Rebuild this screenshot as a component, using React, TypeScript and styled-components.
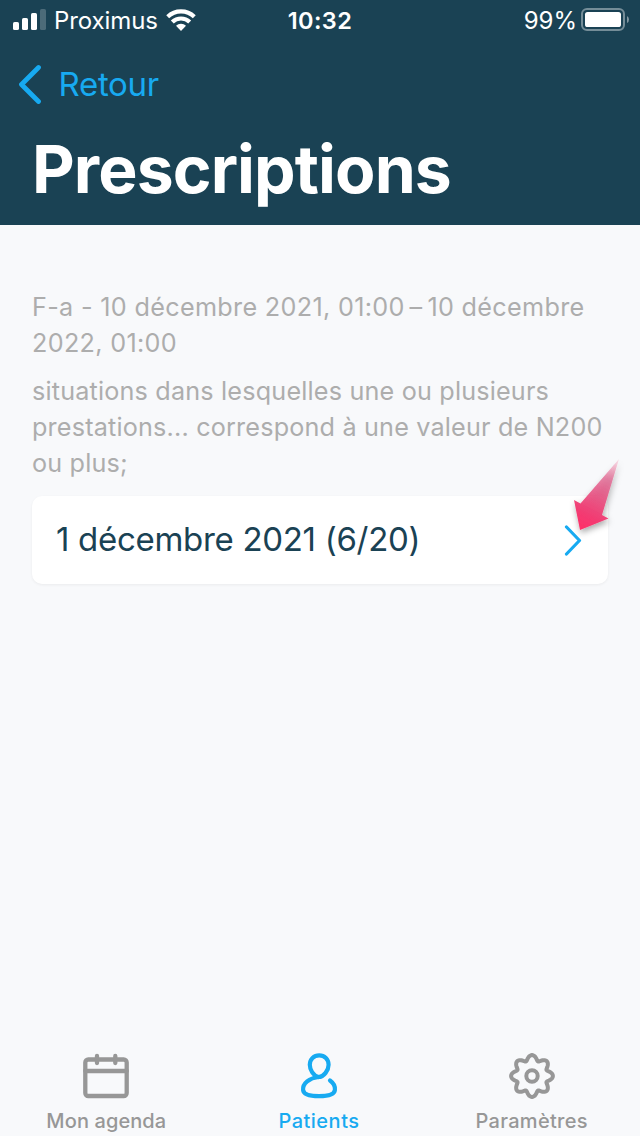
import React from "react";
import styled, { createGlobalStyle } from "styled-components";

const navy = "#1a4254";
const blue = "#17aaf1";
const grey = "#979797";

const GlobalStyle = createGlobalStyle`
  * { box-sizing: border-box; }
  body {
    margin: 0;
    background: #f8f9fb;
    font-family: Inter, "Liberation Sans", sans-serif;
    -webkit-font-smoothing: antialiased;
  }
  svg { display: block; flex: none; }
`;

const Screen = styled.div`
  width: 640px;
  height: 1136px;
  display: flex;
  flex-direction: column;
  overflow: hidden;
`;

const Header = styled.header`
  height: 225px;
  background: ${navy};
  color: #fff;
`;

const StatusBar = styled.div`
  height: 40px;
  display: grid;
  grid-template-columns: 1fr auto 1fr;
  padding: 0 11px 0 13px;
`;

const StatusGroup = styled.div<{ $end?: boolean }>`
  display: flex;
  align-items: flex-start;
  justify-content: ${(p) => (p.$end ? "flex-end" : "flex-start")};
`;

const Label = styled.span<{
  $size: number;
  $line: number;
  $spacing?: number;
  $weight?: number;
}>`
  display: block;
  white-space: pre;
  font-size: ${(p) => p.$size}px;
  line-height: ${(p) => p.$line}px;
  letter-spacing: ${(p) => p.$spacing ?? 0}px;
  font-weight: ${(p) => p.$weight ?? 400};
`;

const Carrier = styled(Label)`
  margin: 0 8px 0 8px;
`;

const Clock = styled(Label)`
  padding-right: 2px;
`;

const BatteryLevel = styled(Label)`
  margin-right: 3px;
`;

const BackButton = styled.button`
  display: flex;
  align-items: center;
  gap: 15.5px;
  height: 88px;
  padding: 0 0 0 18px;
  border: 0;
  background: none;
  font-family: inherit;
  color: ${blue};
`;

const Title = styled.h1`
  margin: 0 0 0 32px;
  font-size: 66px;
  line-height: 82px;
  font-weight: 700;
  letter-spacing: -0.9px;
`;

const Content = styled.main`
  flex: 1;
  padding: 64px 32px 0;
`;

const Paragraph = styled.p`
  margin: 0 0 12px;
  color: #adadad;
`;

const Card = styled.button`
  display: flex;
  align-items: center;
  justify-content: space-between;
  width: 576px;
  height: 88px;
  margin-top: 15px;
  padding: 0 26px 0 24px;
  border: 0;
  border-radius: 10px;
  background: #fff;
  box-shadow: 0 1px 3px rgba(0, 0, 0, 0.06);
  font-family: inherit;
  color: ${navy};
`;

const CardLabel = styled(Label)`
  padding-bottom: 2px;
`;

const CardAction = styled.span`
  position: relative;
`;

const Pointer = styled.svg`
  position: absolute;
  left: -4px;
  top: -72px;
  overflow: visible;
`;

const TabBar = styled.nav`
  display: grid;
  grid-template-columns: repeat(3, 1fr);
  height: 92px;
  padding-right: 2px;
`;

const Tab = styled.a<{ $active?: boolean }>`
  display: flex;
  flex-direction: column;
  align-items: center;
  padding-top: 6px;
  color: ${(p) => (p.$active ? blue : grey)};
`;

const gearPath = (() => {
  const points: string[] = [];
  for (let i = 0; i < 160; i++) {
    const a = (i / 160) * Math.PI * 2;
    const r = 18.3 + 2.6 * Math.cos(8 * a);
    const b = a + 0.03 * Math.sin(8 * a);
    points.push(`${(25 + r * Math.cos(b)).toFixed(2)} ${(26 + r * Math.sin(b)).toFixed(2)}`);
  }
  return `M${points.join("L")}Z`;
})();

const SignalIcon = () => (
  <svg width="33" height="40" viewBox="0 0 33 40" fill="#fff">
    <rect x="0" y="22" width="6" height="8" rx="1.6" />
    <rect x="9" y="18" width="6" height="12" rx="1.6" />
    <rect x="18" y="13" width="6" height="17" rx="1.6" />
    <rect x="27" y="9" width="6" height="21" rx="1.6" opacity=".22" />
  </svg>
);

const WifiIcon = () => (
  <svg width="30" height="40" viewBox="0 0 30 40">
    <g fill="none" stroke="#fff" strokeWidth="4.200">
      <path d="M1.700 16.700a19.300 19.300 0 0 1 26.600 0" />
      <path d="M6.300 22a12.500 12.500 0 0 1 17.400 0" />
    </g>
    <path d="M15 31l-5-5.300a7.200 7.200 0 0 1 10 0z" fill="#fff" />
  </svg>
);

const BatteryIcon = () => (
  <svg width="49" height="40" viewBox="0 0 49 40">
    <rect x="2" y="9" width="42" height="21" rx="5" fill="none" stroke="#fff" strokeOpacity=".4" strokeWidth="2" />
    <rect x="5" y="12" width="36" height="15" rx="2.6" fill="#fff" />
    <path d="M47 16q2 1 2 3.500t-2 3.500z" fill="#fff" fillOpacity=".45" />
  </svg>
);

const CalendarIcon = () => (
  <svg width="50" height="52" viewBox="0 0 50 52" fill="none" stroke="currentColor" strokeWidth="4.300" strokeLinecap="round">
    <rect x="4.300" y="9.500" width="41.400" height="36.500" rx="3" />
    <path d="M4.300 21H45.700M16 6v7M34.300 6v7" />
  </svg>
);

const PersonIcon = () => (
  <svg width="50" height="52" viewBox="0 0 50 52" fill="none" stroke="currentColor" strokeWidth="4.200" strokeLinecap="round" strokeLinejoin="round">
    <path d="M36 30.500C39.500 33 41.300 36.500 40.900 40C40.300 45.300 33 46.200 25 46.200S9.700 45.300 9.100 40C8.400 33.500 15.500 28 24.500 27C30 27 34.600 20 34.600 14.800C34.600 9.200 30.500 5.400 25.200 5.400S15.800 9.200 15.800 14.800C15.800 19.500 19 25.500 24.500 27" />
  </svg>
);

const GearIcon = () => (
  <svg width="50" height="52" viewBox="0 0 50 52" fill="none" stroke="currentColor" strokeWidth="4" strokeLinejoin="round">
    <path d={gearPath} />
    <circle cx="25" cy="26" r="5.700" />
  </svg>
);

const notices = [
  {
    spacing: 0.32,
    lines: ["F-a - 10 décembre 2021, 01:00\u2009–\u200910 décembre", "2022, 01:00"],
  },
  {
    spacing: 0.18,
    lines: [
      "situations dans lesquelles une ou plusieurs",
      "prestations... correspond à une valeur de N200",
      "ou plus;",
    ],
  },
];

const tabs = [
  { text: "Mon agenda", spacing: 0.1, icon: <CalendarIcon /> },
  { text: "Patients", spacing: 0.5, icon: <PersonIcon />, active: true },
  { text: "Paramètres", spacing: 0.3, icon: <GearIcon /> },
];

export default function App() {
  return (
    <Screen>
      <GlobalStyle />
      <Header>
        <StatusBar>
          <StatusGroup>
            <SignalIcon />
            <Carrier $size={24} $line={41} $spacing={-0.1}>Proximus</Carrier>
            <WifiIcon />
          </StatusGroup>
          <Clock $size={23.5} $line={41} $weight={600} $spacing={0.4}>10:32</Clock>
          <StatusGroup $end>
            <BatteryLevel $size={24} $line={41}>99%</BatteryLevel>
            <BatteryIcon />
          </StatusGroup>
        </StatusBar>
        <BackButton>
          <svg width="25" height="40" viewBox="0 0 25 40" fill="none" stroke="currentColor" strokeWidth="4.800" strokeLinecap="round" strokeLinejoin="round">
            <path d="M20.500 3.500L3.500 20.500L20.500 37.500" />
          </svg>
          <Label $size={33} $line={40} $spacing={-0.3}>Retour</Label>
        </BackButton>
        <Title>Prescriptions</Title>
      </Header>
      <Content>
        {notices.map((notice) => (
          <Paragraph key={notice.lines[0]}>
            {notice.lines.map((line) => (
              <Label key={line} $size={25.2} $line={36} $spacing={notice.spacing}>{line}</Label>
            ))}
          </Paragraph>
        ))}
        <Card>
          <CardLabel $size={33} $line={40} $spacing={-0.3}>1 décembre 2021 (6/20)</CardLabel>
          <CardAction>
            <svg width="18" height="32" viewBox="0 0 18 32" fill="none" stroke={blue} strokeWidth="3.200" strokeLinecap="round" strokeLinejoin="round">
              <path d="M2.500 3L15.500 16.500L2.500 30" />
            </svg>
            <Pointer width="80" height="90" viewBox="560 452 80 90">
              <defs>
                <linearGradient id="pointerFill" x1="619" y1="458" x2="583" y2="530" gradientUnits="userSpaceOnUse">
                  <stop offset="0" stopColor="#ee4b7d" stopOpacity="0.1" />
                  <stop offset=".3" stopColor="#df5585" stopOpacity=".7" />
                  <stop offset=".8" stopColor="#f23c73" />
                  <stop offset="1" stopColor="#ff3068" />
                </linearGradient>
                <filter id="pointerShadow" x="-30%" y="-20%" width="160%" height="150%">
                  <feDropShadow dx="1" dy="3" stdDeviation="3" floodOpacity=".35" />
                </filter>
              </defs>
              <path d="M619 459L602 515L608.500 518.500L580 530L574 500L580.500 503.500Z" fill="url(#pointerFill)" filter="url(#pointerShadow)" />
            </Pointer>
          </CardAction>
        </Card>
      </Content>
      <TabBar>
        {tabs.map((tab) => (
          <Tab key={tab.text} $active={tab.active}>
            {tab.icon}
            <Label $size={20} $line={38} $spacing={tab.spacing} $weight={500}>{tab.text}</Label>
          </Tab>
        ))}
      </TabBar>
    </Screen>
  );
}
